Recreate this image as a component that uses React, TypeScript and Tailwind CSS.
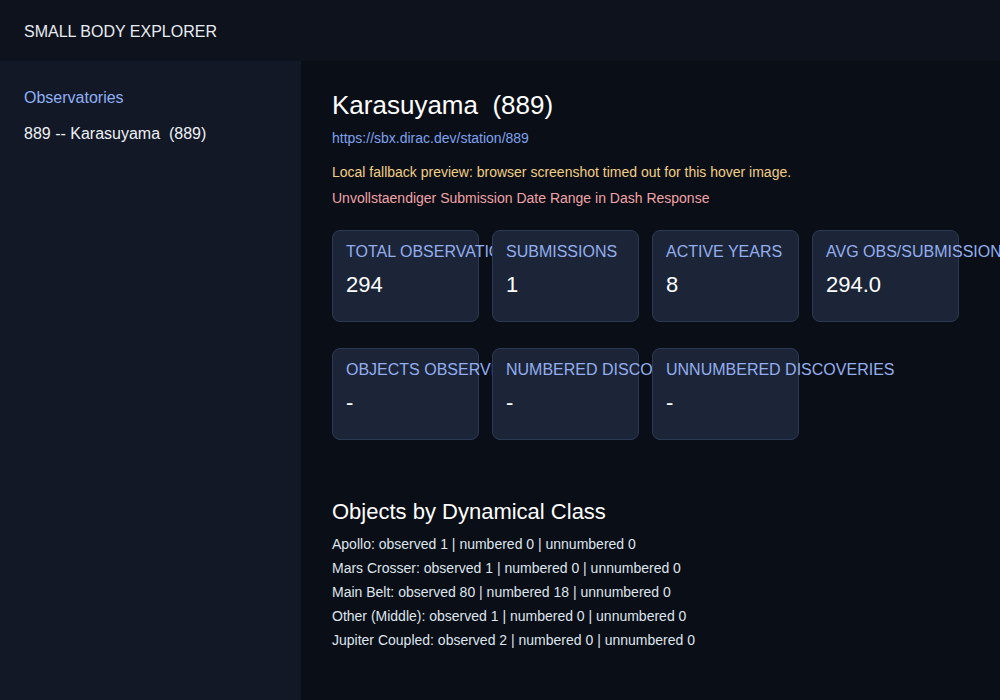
const stats = [
  { label: 'Total Observations', value: '294' },
  { label: 'Submissions', value: '1' },
  { label: 'Active Years', value: '8' },
  { label: 'Avg Obs/Submission', value: '294.0' }
];

const discoveries = [
  { label: 'Objects Observed', value: '-' },
  { label: 'Numbered Discoveries', value: '-' },
  { label: 'Unnumbered Discoveries', value: '-' }
];

const classes = [
  'Apollo: observed 1 | numbered 0 | unnumbered 0',
  'Mars Crosser: observed 1 | numbered 0 | unnumbered 0',
  'Main Belt: observed 80 | numbered 18 | unnumbered 0',
  'Other (Middle): observed 1 | numbered 0 | unnumbered 0',
  'Jupiter Coupled: observed 2 | numbered 0 | unnumbered 0'
];

const StatCard = ({ label, value }: { label: string; value: string }) => (
  <div className="h-[92px] w-[147px] shrink-0 rounded-lg border border-[#2a3a55] bg-[#1c2537] px-[13px] pt-[11px]">
    <div className="whitespace-nowrap text-base uppercase leading-5 text-[#93aef0]">{label}</div>
    <div className="mt-[11px] text-[22px] leading-6 text-white">{value}</div>
  </div>
);

export default function App() {
  return (
    <div className="flex h-[700px] w-[1000px] flex-col overflow-hidden bg-[#0a0e16] font-[family-name:Liberation_Sans,Arial,sans-serif]">
      <header className="flex h-[61px] shrink-0 items-center bg-[#0d121c] px-6 pt-[2px] text-base text-[#e8ecf2]">
        SMALL BODY EXPLORER
      </header>

      <div className="flex min-h-0 flex-1">
        <aside className="w-[301px] shrink-0 bg-[#121826] px-6 pt-[27px]">
          <h3 className="text-base leading-5 text-[#8fb0f4]">Observatories</h3>
          <p className="mt-4 text-base leading-5 text-[#eef1f6]">889 -- Karasuyama&nbsp; (889)</p>
        </aside>

        <main className="flex-1 px-[31px] pt-[30px]">
          <h1 className="text-[26px] leading-7 text-white">Karasuyama&nbsp; (889)</h1>
          <a className="mt-[11px] block text-sm leading-4 text-[#7fa2ee]">https://sbx.dirac.dev/station/889</a>
          <p className="mt-[18px] text-sm leading-4 text-[#f2cf86]">
            Local fallback preview: browser screenshot timed out for this hover image.
          </p>
          <p className="mt-[10px] text-sm leading-4 text-[#f0a3a8]">
            Unvollstaendiger Submission Date Range in Dash Response
          </p>

          <div className="mt-[24px] flex gap-[13px]">
            {stats.map((s) => (
              <StatCard key={s.label} {...s} />
            ))}
          </div>

          <div className="mt-[26px] flex gap-[13px]">
            {discoveries.map((s) => (
              <StatCard key={s.label} {...s} />
            ))}
          </div>

          <h2 className="mt-[60px] text-[22px] leading-6 text-white">Objects by Dynamical Class</h2>
          <ul className="mt-[8px] text-sm text-[#dfe5ee]">
            {classes.map((c) => (
              <li key={c} className="leading-6">
                {c}
              </li>
            ))}
          </ul>
        </main>
      </div>
    </div>
  );
}
